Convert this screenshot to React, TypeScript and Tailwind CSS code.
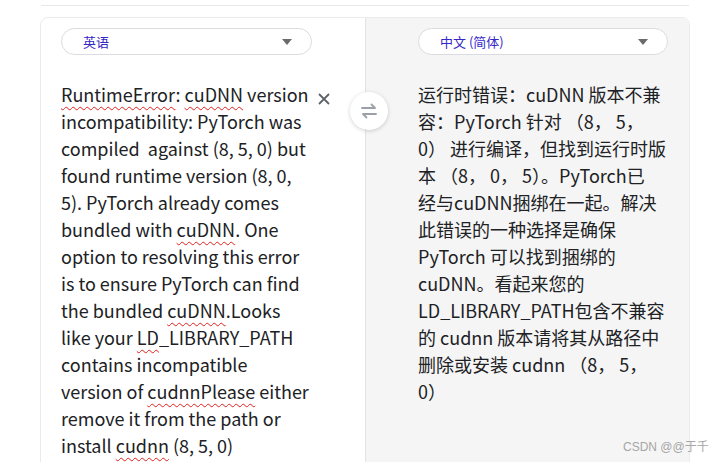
import React from "react";

const W = ({ children }: { children: React.ReactNode }) => (
  <span className="underline decoration-wavy decoration-[#e0201b] decoration-1 underline-offset-[4px]">
    {children}
  </span>
);

function Dropdown({ label }: { label: string }) {
  return (
    <div className="flex h-[27px] items-center justify-between rounded-full border border-[#dadce0] bg-white pl-[21px] pr-[19px]">
      <span className="text-[13px] leading-none text-[#3526c8]">{label}</span>
      <svg width="10" height="6" viewBox="0 0 10 6">
        <path d="M0 0 H10 L5 6 Z" fill="#6b6b6b" />
      </svg>
    </div>
  );
}

const zhLines = [
  "运行时错误：cuDNN 版本不兼",
  "容：PyTorch 针对 （8， 5，",
  "0） 进行编译，但找到运行时版",
  "本 （8， 0， 5）。PyTorch已",
  "经与cuDNN捆绑在一起。解决",
  "此错误的一种选择是确保",
  "PyTorch 可以找到捆绑的",
  "cuDNN。看起来您的",
  "LD_LIBRARY_PATH包含不兼容",
  "的 cudnn 版本请将其从路径中",
  "删除或安装 cudnn （8， 5，",
  "0）",
];

export default function App() {
  return (
    <div
      className="relative h-[462px] w-[722px] overflow-hidden bg-white"
      style={{ fontFamily: '"Noto Sans CJK SC", "Noto Sans", sans-serif' }}
    >
      <div className="ml-[41px] mt-[5px] h-px w-[648px] bg-[#e8e8e8]" />
      <div className="relative ml-[40px] mt-[11px] flex h-[500px] w-[650px] rounded-t-lg border border-[#ebebeb]">
        <div className="w-[324px] pl-[20px] pt-[10px]">
          <div className="w-[251px]">
            <Dropdown label="英语" />
          </div>
          <div className="mt-[26px] flex">
            <p className="w-[251px] text-[18px] leading-[27px] text-[#202124]">
              <W>RuntimeError</W>: <W>cuDNN</W> version incompatibility: PyTorch was compiled{"\u00a0"} against (8, 5, 0) but found runtime version (8, 0, 5). PyTorch already comes bundled with <W>cuDNN</W>. One option to resolving this error is to ensure PyTorch can find the bundled <W>cuDNN</W>.Looks like your <W>LD</W>_LIBRARY_PATH contains incompatible version of <W>cudnnPlease</W> either remove it from the path or install <W>cudnn</W> (8, 5, 0)
            </p>
            <svg className="ml-[6px] mt-[12px]" width="12" height="12" viewBox="0 0 12 12">
              <path d="M1 1 L11 11 M11 1 L1 11" stroke="#5f6368" strokeWidth="1.8" />
            </svg>
          </div>
        </div>
        <div className="flex-1 rounded-tr-lg border-l border-[#e3e3e3] bg-[#f5f5f5] pl-[52px] pt-[10px]">
          <div className="w-[250px]">
            <Dropdown label="中文 (简体)" />
          </div>
          <div className="mt-[26px] w-[260px] text-[18px] leading-[27px] text-[#202124]">
            {zhLines.map((l, i) => (
              <div key={i} className="whitespace-pre">
                {l}
              </div>
            ))}
          </div>
        </div>
        <div className="absolute left-[309px] top-[74px] flex h-[38px] w-[38px] items-center justify-center rounded-full bg-white shadow-[0_1px_4px_rgba(0,0,0,0.18)]">
          <svg width="18" height="16" viewBox="0 0 18 16">
            <path d="M2 5 H15 L11.5 1.5 M16 11 H3 L6.5 14.5" stroke="#9aa0a6" strokeWidth="1.8" fill="none" strokeLinecap="round" strokeLinejoin="round" />
          </svg>
        </div>
      </div>
      <div
        className="absolute left-[623px] top-[439px] whitespace-nowrap text-[12px] leading-[16px] text-[#a6a6a6]"
        style={{ fontFamily: '"Liberation Sans", "Noto Sans CJK SC", sans-serif' }}
      >
        CSDN @@于千
      </div>
    </div>
  );
}
